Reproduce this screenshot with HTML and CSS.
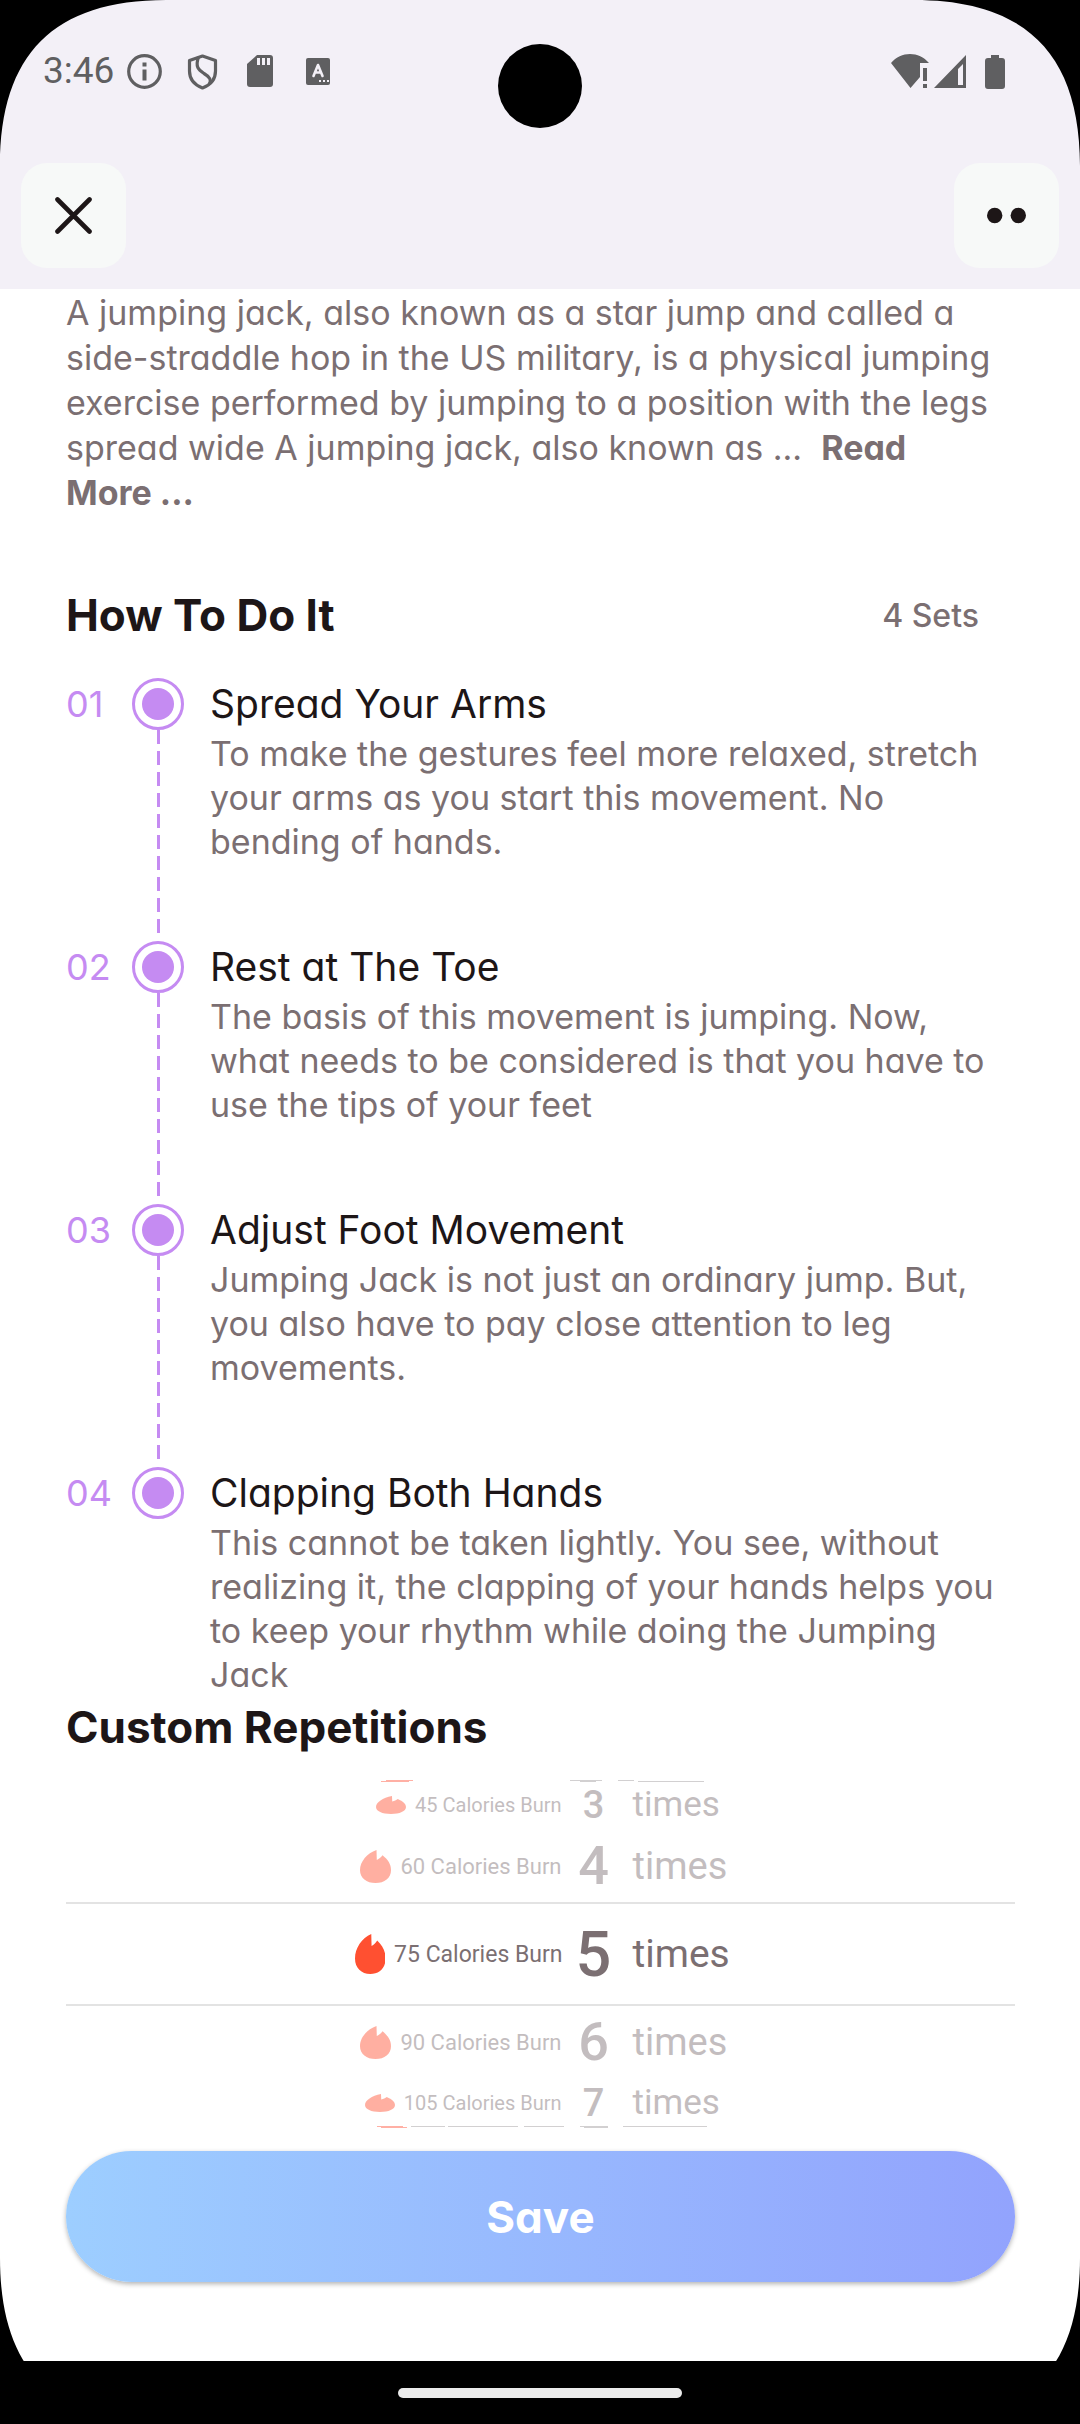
FILE: index.html
```html
<!DOCTYPE html>
<html lang="en">
<head>
<meta charset="utf-8">
<meta name="viewport" content="width=device-width, initial-scale=1">
<title>Jumping Jack</title>
<link rel="stylesheet" href="styles.css">
</head>
<body>
<svg class="sprite" aria-hidden="true">
  <symbol id="flame" viewBox="0 0 31 40" preserveAspectRatio="none">
    <path d="M16.500 0 L16.800 12 C19 11 21 9 22.500 6.500 C28 12 31 17 31 24.500 C31 34 24.500 40 15.500 40 C6.500 40 0 34 0 24.500 C0 14 7 4 16.500 0 Z" fill="#ff5031"/>
  </symbol>
</svg>
<div class="screen">
  <header class="top">
    <div class="status">
      <span class="time">3:46</span>
      <svg class="status-left" viewBox="0 0 92 36" aria-hidden="true">
        <g fill="none" stroke="#5f5f61" stroke-width="3.200">
          <circle cx="17.500" cy="17.500" r="15.800"/>
          <path d="M75.500 2 L88.500 6.500 V17 C88.500 25 83.500 31 75.500 34 C67.500 31 62.500 25 62.500 17 V6.500 Z" stroke-linejoin="round"/>
          <path d="M71.500 3 C68 13 71.500 16 77 19.500 C83 23 84.500 26 82.500 30"/>
        </g>
        <g fill="#5f5f61">
          <rect x="15.500" y="8.500" width="4" height="4"/>
          <rect x="15.500" y="15.500" width="4" height="11"/>
        </g>
      </svg>
      <svg class="status-cards" viewBox="0 0 84 36" aria-hidden="true">
        <path d="M10 1 H23 Q26 1 26 4 V30 Q26 33 23 33 H3 Q0 33 0 30 V10 Z" fill="#5f5f61"/>
        <path d="M10 4 h3 v7 h-3 z M15 4 h3 v7 h-3 z M20 4 h3 v7 h-3 z" fill="#f3f0f7"/>
        <rect x="59" y="4" width="24" height="27" rx="2" fill="#5f5f61"/>
        <path d="M66.500 22 L71 11 L75.500 22 M68 18.500 H74" fill="none" stroke="#f3f0f7" stroke-width="2.600" stroke-linecap="round" stroke-linejoin="round"/>
        <path d="M72 26 h2 v2 h-2 z M76 26 h2 v2 h-2 z M80 26 h2 v2 h-2 z" fill="#f3f0f7"/>
      </svg>
      <svg class="status-right" viewBox="0 0 114 36" aria-hidden="true">
        <g fill="#5f5f61">
          <path d="M0 9 C10 -3 28 -3 38 9 H29 V23 L19.500 34 Z"/>
          <path d="M32 14 h4 v13 h-4 z M32 30 h4 v4 h-4 z"/>
          <path d="M43 34 L75 1 V34 Z M67 15 V31 H72 V10 Z" fill-rule="evenodd"/>
          <path d="M100 1 h8 v3 h3 q3 0 3 3 v25 q0 3 -3 3 h-14 q-3 0 -3 -3 v-25 q0 -3 3 -3 h3 z"/>
        </g>
      </svg>
    </div>
    <nav class="actions">
      <button class="icon-button" type="button" aria-label="Close">
        <svg viewBox="0 0 37 37" class="icon"><path d="M2.500 2.500 L34.500 34.500 M34.500 2.500 L2.500 34.500" fill="none" stroke="#1d1617" stroke-width="4.600" stroke-linecap="round"/></svg>
      </button>
      <button class="icon-button" type="button" aria-label="More options">
        <svg viewBox="0 0 39 37" class="icon icon-more"><circle cx="7.700" cy="18.500" r="7.700" fill="#1d1617"/><circle cx="31.300" cy="18.500" r="7.700" fill="#1d1617"/></svg>
      </button>
    </nav>
  </header>

  <main class="content">
    <p class="intro">A jumping jack, also known as a star jump and called a<br>side-straddle hop in the US military, is a physical jumping<br>exercise performed by jumping to a position with the legs<br>spread wide A jumping jack, also known as ...&nbsp; <a class="read-more" href="#more">Read<br>More ...</a></p>

    <div class="section-head">
      <h2 class="heading">How To Do It</h2>
      <span class="sets">4 Sets</span>
    </div>

    <ol class="steps">
      <li class="step">
        <span class="number">01</span>
        <div class="track"><span class="ring"></span><span class="dashes"></span></div>
        <div class="step-text">
          <h3 class="step-title">Spread Your Arms</h3>
          <p class="desc">To make the gestures feel more relaxed, stretch<br>your arms as you start this movement. No<br>bending of hands.</p>
        </div>
      </li>
      <li class="step">
        <span class="number">02</span>
        <div class="track"><span class="ring"></span><span class="dashes"></span></div>
        <div class="step-text">
          <h3 class="step-title">Rest at The Toe</h3>
          <p class="desc">The basis of this movement is jumping. Now,<br>what needs to be considered is that you have to<br>use the tips of your feet</p>
        </div>
      </li>
      <li class="step">
        <span class="number">03</span>
        <div class="track"><span class="ring"></span><span class="dashes"></span></div>
        <div class="step-text">
          <h3 class="step-title">Adjust Foot Movement</h3>
          <p class="desc">Jumping Jack is not just an ordinary jump. But,<br>you also have to pay close attention to leg<br>movements.</p>
        </div>
      </li>
      <li class="step step-last">
        <span class="number">04</span>
        <div class="track"><span class="ring"></span></div>
        <div class="step-text">
          <h3 class="step-title">Clapping Both Hands</h3>
          <p class="desc">This cannot be taken lightly. You see, without<br>realizing it, the clapping of your hands helps you<br>to keep your rhythm while doing the Jumping<br>Jack</p>
        </div>
      </li>
    </ol>

    <h2 class="heading" id="reps">Custom Repetitions</h2>
    <div class="wheel" role="radiogroup" aria-labelledby="reps">
      <svg class="edge edge-top" viewBox="0 0 376 2" aria-hidden="true">
        <path d="M33 0 h27 v1 h-4 v1 h-28 v-1 h5 z" fill="#ffb0a5"/>
        <path d="M217 0 h32 v1 h-6 v1 h-16 v-1 h-10 z M265 0 h16 v1 h70 v1 h-66 v-1 h-20 z" fill="#d2d0d1"/>
      </svg>
      <label class="row row-far">
        <input class="pick" type="radio" name="reps" value="3">
        <span class="burn"><svg class="flame"><use href="#flame"/></svg>45 Calories Burn</span>
        <span class="count">3</span><span class="unit">times</span>
      </label>
      <label class="row row-near">
        <input class="pick" type="radio" name="reps" value="4">
        <span class="burn"><svg class="flame"><use href="#flame"/></svg>60 Calories Burn</span>
        <span class="count">4</span><span class="unit">times</span>
      </label>
      <label class="row row-current">
        <input class="pick" type="radio" name="reps" value="5" checked>
        <span class="burn"><svg class="flame"><use href="#flame"/></svg>75 Calories Burn</span>
        <span class="count">5</span><span class="unit">times</span>
      </label>
      <label class="row row-near">
        <input class="pick" type="radio" name="reps" value="6">
        <span class="burn"><svg class="flame"><use href="#flame"/></svg>90 Calories Burn</span>
        <span class="count">6</span><span class="unit">times</span>
      </label>
      <label class="row row-far">
        <input class="pick" type="radio" name="reps" value="7">
        <span class="burn"><svg class="flame"><use href="#flame"/></svg>105 Calories Burn</span>
        <span class="count">7</span><span class="unit">times</span>
      </label>
      <svg class="edge edge-bottom" viewBox="0 0 376 2" aria-hidden="true">
        <path d="M24 0 h26 v1 h4 v1 h-26 v-1 h-4 z" fill="#ffb0a5"/>
        <path d="M58 0 h34 v1 h-34 z M95 0 h70 v1 h-70 z M171 0 h40 v1 h-40 z M227 0 h28 v2 h-24 v-1 h-4 z M270 0 h84 v1 h-84 z" fill="#d2d0d1"/>
      </svg>
    </div>
    <button class="save" type="button">Save</button>
  </main>

  <footer class="home"><span class="home-bar"></span></footer>

  <span class="camera"></span>
  <svg class="corner corner-tl" viewBox="0 0 166 166" aria-hidden="true"><path d="M0 0 H166 C54 0 0 54 0 166 Z"/></svg>
  <svg class="corner corner-tr" viewBox="0 0 166 166" aria-hidden="true"><path d="M166 0 H0 C112 0 166 54 166 166 Z"/></svg>
  <svg class="corner corner-bl" viewBox="0 0 166 166" aria-hidden="true"><path d="M0 166 V0 C0 112 54 166 166 166 Z"/></svg>
  <svg class="corner corner-br" viewBox="0 0 166 166" aria-hidden="true"><path d="M166 166 V0 C166 112 112 166 0 166 Z"/></svg>
</div>
</body>
</html>
```

FILE: styles.css
```css
* { box-sizing: border-box; }

body {
  margin: 0;
  background: #000;
  font-family: Inter, "Open Sans", sans-serif;
  font-feature-settings: "cv11";
  color: #1d1617;
}

h2, h3, p, ol { margin: 0; padding: 0; font-weight: 400; }
button { border: 0; padding: 0; font: inherit; cursor: pointer; }

.sprite { display: none; }

.screen {
  position: relative;
  min-height: 100vh;
  display: flex;
  flex-direction: column;
  background: #fff;
}

/* Top bar */
.top {
  background: #f3f0f7;
  padding-bottom: 21px;
}

.status {
  display: flex;
  align-items: flex-start;
  height: 163px;
  padding: 54px 75px 0 43px;
  font-family: Roboto, sans-serif;
}
.time {
  width: 84px;
  font-size: 37px;
  line-height: 34px;
  color: #5f5f61;
}
.status-left { width: 92px; height: 36px; }
.status-cards { width: 84px; height: 36px; margin-left: 28px; }
.status-right { width: 114px; height: 36px; margin-left: auto; }

.actions {
  display: flex;
  justify-content: space-between;
  padding: 0 21px;
}
.icon-button {
  display: grid;
  place-items: center;
  width: 105px;
  height: 105px;
  border-radius: 26px;
  background: #f7f9f8;
}
.icon { width: 37px; height: 37px; }
.icon-more { width: 39px; }

/* Content */
.content {
  flex: 1;
  display: flex;
  flex-direction: column;
  padding: 1px 65px 79px 66px;
}

.intro {
  font-size: 34px;
  line-height: 45px;
  color: #7b6f72;
}
.read-more {
  color: inherit;
  font-weight: 700;
  text-decoration: none;
}

.section-head {
  display: flex;
  justify-content: space-between;
  align-items: center;
  margin: 70px 0 33px;
  padding-right: 36px;
}
.heading {
  font-size: 44px;
  line-height: 60px;
  font-weight: 700;
}
.sets {
  font-size: 32px;
  font-weight: 500;
  color: #7b6f72;
}

.steps { list-style: none; }
.step {
  display: grid;
  grid-template-columns: 66px 52px 1fr;
  min-height: 263px;
}
.step-last { min-height: 0; }
.number {
  font-size: 36px;
  line-height: 52px;
  color: #c58bf2;
}
.track {
  display: flex;
  flex-direction: column;
  align-items: center;
}
.ring {
  display: grid;
  place-items: center;
  width: 52px;
  height: 52px;
  border: 3px solid #c58bf2;
  border-radius: 50%;
}
.ring::before {
  content: "";
  width: 32px;
  height: 32px;
  border-radius: 50%;
  background: #c58bf2;
}
.dashes {
  flex: 1;
  width: 3px;
  margin-bottom: 7px;
  background: repeating-linear-gradient(#c58bf2 0 14px, transparent 14px 21px);
}
.step-text { padding-left: 26px; }
.step-title {
  font-size: 39px;
  line-height: 52px;
}
.desc {
  padding-top: 2px;
  font-size: 34px;
  line-height: 44px;
  color: #7b6f72;
}

/* Repetition wheel */
.wheel {
  position: relative;
  margin: 23px 0;
  font-family: Roboto, sans-serif;
  color: #7b6f72;
}
.edge {
  position: absolute;
  left: 50%;
  width: 376px;
  height: 2px;
  margin-left: -188px;
}
.edge-top { top: 0; }
.edge-bottom { bottom: 0; }
.row {
  position: relative;
  display: grid;
  grid-template-columns: 208px 70px 94px;
  justify-content: center;
  align-items: center;
}
.pick {
  position: absolute;
  opacity: 0;
  margin: 0;
}
.burn {
  display: flex;
  align-items: center;
  justify-content: flex-end;
  gap: 9px;
  white-space: nowrap;
}
.flame { width: 31px; height: 40px; }
.count { text-align: center; font-weight: 500; padding-right: 8px; }

.row-current {
  height: 104px;
  border-top: 2px solid #e3e3e3;
  border-bottom: 2px solid #e3e3e3;
  font-size: 23px;
}
.row-current .count { font-size: 63px; }
.row-current .unit { font-size: 39px; }

.row-near { height: 72px; font-size: 22px; }
.row-near .flame { height: 33px; }
.row-near .count { font-size: 54px; line-height: 60px; }
.row-near .unit { font-size: 38px; }
.row-near .burn, .row-far .burn { padding-right: 1px; }

.row-far { height: 50px; font-size: 20px; }
.row-far .flame { width: 30px; height: 18px; }
.row-far .count { font-size: 38px; line-height: 40px; }
.row-far .unit { font-size: 35px; line-height: 40px; }

.row-near > span, .row-far > span { opacity: 0.45; }

.save {
  height: 131px;
  border-radius: 66px;
  background: linear-gradient(90deg, #9dceff, #92a3fd);
  box-shadow: 0 2px 5px rgba(0, 0, 0, 0.3);
  color: #fff;
  font-size: 44px;
  font-weight: 700;
}

/* System navigation */
.home {
  display: flex;
  justify-content: center;
  height: 63px;
  padding-top: 27px;
  background: #000;
}
.home-bar {
  width: 284px;
  height: 10px;
  border-radius: 5px;
  background: #ebebeb;
}

/* Display cut-outs */
.camera {
  position: absolute;
  top: 44px;
  left: 50%;
  width: 84px;
  height: 84px;
  margin-left: -42px;
  border-radius: 50%;
  background: #000;
}
.corner {
  position: absolute;
  width: 166px;
  height: 166px;
  pointer-events: none;
}
.corner-tl { top: 0; left: 0; }
.corner-tr { top: 0; right: 0; }
.corner-bl { bottom: 0; left: 0; }
.corner-br { bottom: 0; right: 0; }
```
